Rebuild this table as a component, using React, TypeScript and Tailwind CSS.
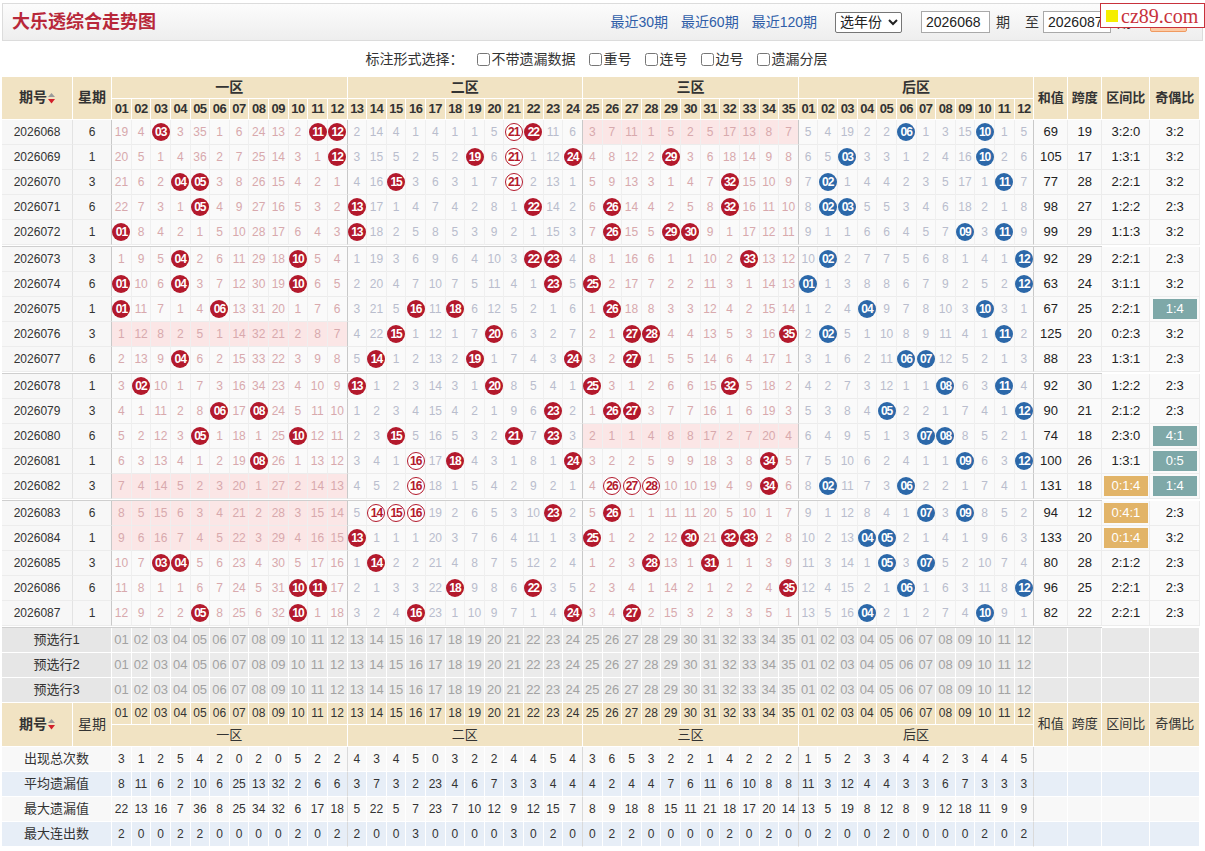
import React from "react";

// row: 期号, 星期, 一区, 二区, 三区, 后区, 和值, 跨度, 区间比, 奇偶比, flags
// "*" = drawn ball, "o" = ringed ball, flags: z = 区间比 highlight, e = 奇偶比 highlight
type Row = [string, string, string, string, string, string, string, string, string, string, string];

const DATA: Row[] = [
  ["2026068", "6", "19 4 * 3 35 1 6 24 13 2 * *", "2 14 4 1 4 1 1 5 o * 11 6", "3 7 11 1 5 2 5 17 13 8 7", "5 4 19 2 2 * 1 3 15 * 1 5", "69", "19", "3:2:0", "3:2", ""],
  ["2026069", "1", "20 5 1 4 36 2 7 25 14 3 1 *", "3 15 5 2 5 2 * 6 o 1 12 *", "4 8 12 2 * 3 6 18 14 9 8", "6 5 * 3 3 1 2 4 16 * 2 6", "105", "17", "1:3:1", "3:2", ""],
  ["2026070", "3", "21 6 2 * * 3 8 26 15 4 2 1", "4 16 * 3 6 3 1 7 o 2 13 1", "5 9 13 3 1 4 7 * 15 10 9", "7 * 1 4 4 2 3 5 17 1 * 7", "77", "28", "2:2:1", "3:2", ""],
  ["2026071", "6", "22 7 3 1 * 4 9 27 16 5 3 2", "* 17 1 4 7 4 2 8 1 * 14 2", "6 * 14 4 2 5 8 * 16 11 10", "8 * * 5 5 3 4 6 18 2 1 8", "98", "27", "1:2:2", "2:3", ""],
  ["2026072", "1", "* 8 4 2 1 5 10 28 17 6 4 3", "* 18 2 5 8 5 3 9 2 1 15 3", "7 * 15 5 * * 9 1 17 12 11", "9 1 1 6 6 4 5 7 * 3 * 9", "99", "29", "1:1:3", "3:2", ""],
  ["2026073", "3", "1 9 5 * 2 6 11 29 18 * 5 4", "1 19 3 6 9 6 4 10 3 * * 4", "8 1 16 6 1 1 10 2 * 13 12", "10 * 2 7 7 5 6 8 1 4 1 *", "92", "29", "2:2:1", "2:3", ""],
  ["2026074", "6", "* 10 6 * 3 7 12 30 19 * 6 5", "2 20 4 7 10 7 5 11 4 1 * 5", "* 2 17 7 2 2 11 3 1 14 13", "* 1 3 8 8 6 7 9 2 5 2 *", "63", "24", "3:1:1", "3:2", ""],
  ["2026075", "1", "* 11 7 1 4 * 13 31 20 1 7 6", "3 21 5 * 11 * 6 12 5 2 1 6", "1 * 18 8 3 3 12 4 2 15 14", "1 2 4 * 9 7 8 10 3 * 3 1", "67", "25", "2:2:1", "1:4", "e"],
  ["2026076", "3", "1 12 8 2 5 1 14 32 21 2 8 7", "4 22 * 1 12 1 7 * 6 3 2 7", "2 1 * * 4 4 13 5 3 16 *", "2 * 5 1 10 8 9 11 4 1 * 2", "125", "20", "0:2:3", "3:2", ""],
  ["2026077", "6", "2 13 9 * 6 2 15 33 22 3 9 8", "5 * 1 2 13 2 * 1 7 4 3 *", "3 2 * 1 5 5 14 6 4 17 1", "3 1 6 2 11 * * 12 5 2 1 3", "88", "23", "1:3:1", "2:3", ""],
  ["2026078", "1", "3 * 10 1 7 3 16 34 23 4 10 9", "* 1 2 3 14 3 1 * 8 5 4 1", "* 3 1 2 6 6 15 * 5 18 2", "4 2 7 3 12 1 1 * 6 3 * 4", "92", "30", "1:2:2", "2:3", ""],
  ["2026079", "3", "4 1 11 2 8 * 17 * 24 5 11 10", "1 2 3 4 15 4 2 1 9 6 * 2", "1 * * 3 7 7 16 1 6 19 3", "5 3 8 4 * 2 2 1 7 4 1 *", "90", "21", "2:1:2", "2:3", ""],
  ["2026080", "6", "5 2 12 3 * 1 18 1 25 * 12 11", "2 3 * 5 16 5 3 2 * 7 * 3", "2 1 1 4 8 8 17 2 7 20 4", "6 4 9 5 1 3 * * 8 5 2 1", "74", "18", "2:3:0", "4:1", "e"],
  ["2026081", "1", "6 3 13 4 1 2 19 * 26 1 13 12", "3 4 1 o 17 * 4 3 1 8 1 *", "3 2 2 5 9 9 18 3 8 * 5", "7 5 10 6 2 4 1 1 * 6 3 *", "100", "26", "1:3:1", "0:5", "e"],
  ["2026082", "3", "7 4 14 5 2 3 20 1 27 2 14 13", "4 5 2 o 18 1 5 4 2 9 2 1", "4 o o o 10 10 19 4 9 * 6", "8 * 11 7 3 * 2 2 1 7 4 1", "131", "18", "0:1:4", "1:4", "ze"],
  ["2026083", "6", "8 5 15 6 3 4 21 2 28 3 15 14", "5 o o o 19 2 6 5 3 10 * 2", "5 * 1 1 11 11 20 5 10 1 7", "9 1 12 8 4 1 * 3 * 8 5 2", "94", "12", "0:4:1", "2:3", "z"],
  ["2026084", "1", "9 6 16 7 4 5 22 3 29 4 16 15", "* 1 1 1 20 3 7 6 4 11 1 3", "* 1 2 2 12 * 21 * * 2 8", "10 2 13 * * 2 1 4 1 9 6 3", "133", "20", "0:1:4", "3:2", "z"],
  ["2026085", "3", "10 7 * * 5 6 23 4 30 5 17 16", "1 * 2 2 21 4 8 7 5 12 2 4", "1 2 3 * 13 1 * 1 1 3 9", "11 3 14 1 * 3 * 5 2 10 7 4", "80", "28", "2:1:2", "2:3", ""],
  ["2026086", "6", "11 8 1 1 6 7 24 5 31 * * 17", "2 1 3 3 22 * 9 8 6 * 3 5", "2 3 4 1 14 2 1 2 2 4 *", "12 4 15 2 1 * 1 6 3 11 8 *", "96", "25", "2:2:1", "2:3", ""],
  ["2026087", "1", "12 9 2 2 * 8 25 6 32 * 1 18", "3 2 4 * 23 1 10 9 7 1 4 *", "3 4 * 2 15 3 2 3 3 5 1", "13 5 16 * 2 1 2 7 4 * 9 1", "82", "22", "2:2:1", "2:3", ""],
];

const STATS: { label: string; bg: string; vals: string }[] = [
  { label: "出现总次数", bg: "bg-[#f8f8f8]", vals: "3 1 2 5 4 2 0 2 0 5 2 2 4 3 4 5 0 3 2 2 4 4 5 4 3 6 5 3 2 2 1 4 2 2 2 1 5 2 3 3 4 4 2 3 4 4 5" },
  { label: "平均遗漏值", bg: "bg-[#e7eef7]", vals: "8 11 6 2 10 6 25 13 32 2 6 6 3 7 3 2 23 4 6 7 3 3 4 4 4 2 4 4 7 6 11 6 10 8 8 11 3 12 4 4 3 3 6 7 3 3 3" },
  { label: "最大遗漏值", bg: "bg-[#f8f8f8]", vals: "22 13 16 7 36 8 25 34 32 6 17 18 5 22 5 7 23 7 10 12 9 12 15 7 8 9 18 8 15 11 21 18 17 20 14 13 5 19 8 12 8 9 12 18 11 9 9" },
  { label: "最大连出数", bg: "bg-[#e7eef7]", vals: "2 0 0 2 2 0 0 0 0 2 0 2 2 0 0 3 0 0 0 0 3 0 2 0 0 2 2 0 0 0 0 2 0 2 0 0 2 0 0 2 0 0 0 0 2 0 2" },
];

const ZONES = [
  { name: "一区", start: 1, len: 12 },
  { name: "二区", start: 13, len: 12 },
  { name: "三区", start: 25, len: 11 },
  { name: "后区", start: 1, len: 12 },
];

const pad = (n: number) => (n < 10 ? "0" + n : String(n));

// flat list of the 47 column numbers with zone index
const COLS = ZONES.flatMap((z, zi) =>
  Array.from({ length: z.len }, (_, i) => ({ n: z.start + i, zi, last: i === z.len - 1 }))
);

function SortIcon() {
  return (
    <svg width="7" height="11" viewBox="0 0 7 11" className="ml-[1px] inline-block">
      <path d="M3.5 0L7 4H0Z" fill="#9a9a9a" />
      <path d="M0 6H7L3.5 10.5Z" fill="#d21f2a" />
    </svg>
  );
}

function Ball({ n, kind }: { n: number; kind: "red" | "blue" | "ring" }) {
  const cls =
    kind === "red"
      ? "bg-[#b3192c] text-white"
      : kind === "blue"
      ? "bg-[#2c68a9] text-white"
      : "border border-[#b3192c] bg-white text-[#b3192c]";
  return (
    <span
      className={`inline-flex h-[18px] w-[18px] items-center justify-center rounded-full text-[12px] font-bold tracking-[-1px] ${cls}`}
    >
      {pad(n)}
    </span>
  );
}

function Watermark() {
  return (
    <div className="absolute right-0 top-0 z-10 flex h-[25px] w-[105px] items-center gap-[3px] border border-[#c8323c] bg-white pl-[5px]">
      <span className="h-[12px] w-[12px] bg-[#f5ee00]" />
      <span className="font-['Liberation_Serif',serif] text-[20px] leading-none text-[#c8323c]">cz89.com</span>
    </div>
  );
}

function TopBar() {
  return (
    <div className="mx-[2px] mt-[3px] flex h-[38px] items-center border border-[#dcdcdc] bg-linear-to-b from-[#fcfcfc] to-[#eeeeee] pl-[9px] pr-[15px]">
      <h1 className="text-[18px] font-bold text-[#b8283a]">大乐透综合走势图</h1>
      <div className="ml-auto flex items-center text-[14px] text-[#333]">
        <span className="text-[#2f5ea8]">最近30期</span>
        <span className="ml-[13px] text-[#2f5ea8]">最近60期</span>
        <span className="ml-[13px] text-[#2f5ea8]">最近120期</span>
        <select className="ml-[18px] h-[21px] w-[67px] rounded-[2px] border border-[#767676] bg-white text-[14px] text-[#222]">
          <option>选年份</option>
        </select>
        <input
          readOnly
          value="2026068"
          className="ml-[19px] h-[22px] w-[69px] border border-[#a9a9a9] bg-white px-[4px] text-[14px] text-[#222]"
        />
        <span className="ml-[6px]">期</span>
        <span className="ml-[15px]">至</span>
        <input
          readOnly
          value="2026087"
          className="ml-[4px] h-[22px] w-[68px] border border-[#a9a9a9] bg-white px-[4px] text-[14px] text-[#222]"
        />
        <span className="ml-[6px]">期</span>
        <span className="ml-[19px] flex h-[20px] w-[37px] items-center justify-center rounded-[2px] border border-[#f09a60] bg-[#fccba6] text-[13px] text-[#b8283a]">
          查看
        </span>
      </div>
    </div>
  );
}

function Options() {
  const items = ["不带遗漏数据", "重号", "连号", "边号", "遗漏分层"];
  return (
    <div className="flex h-[36px] items-center justify-center pr-[12px] text-[14px] text-[#333]">
      <span>标注形式选择：</span>
      {items.map((t) => (
        <label key={t} className="ml-[13px] flex items-center gap-[2px]">
          <input type="checkbox" className="m-0 h-[13px] w-[13px]" />
          <span>{t}</span>
        </label>
      ))}
    </div>
  );
}

const H = "border-b border-r border-white bg-[#f1e3c3]";

function TopHeader() {
  return (
    <thead>
      <tr className="h-[20px]">
        <th rowSpan={2} className={`${H} text-[14px] font-bold`}>
          期号<SortIcon />
        </th>
        <th rowSpan={2} className={`${H} text-[14px] font-bold`}>星期</th>
        {ZONES.map((z) => (
          <th key={z.name} colSpan={z.len} className={`${H} text-[14px] font-bold`}>
            {z.name}
          </th>
        ))}
        {["和值", "跨度", "区间比", "奇偶比"].map((t) => (
          <th key={t} rowSpan={2} className={`${H} text-[13px] font-bold`}>
            {t}
          </th>
        ))}
      </tr>
      <tr className="h-[20px]">
        {COLS.map((c, i) => (
          <th key={i} className={`${H} p-0 text-[13px] font-semibold tracking-[-0.5px]`}>
            {pad(c.n)}
          </th>
        ))}
      </tr>
    </thead>
  );
}

function Separator() {
  return (
    <tr>
      <td colSpan={51} className="h-[2px] bg-white p-0 text-[0px] leading-[0]">
        <div className="mt-[1px] h-[1px] bg-[#cfcfcf]" />
      </td>
    </tr>
  );
}

function DataRow({ r }: { r: Row }) {
  const [no, wk, z1, z2, z3, bk, sum, span, zr, oe, fl] = r;
  const counts = zr.split(":");
  const tokens = [z1, z2, z3, bk].flatMap((s) => s.split(" "));
  const bb = "border-b border-b-[#ececec]";
  return (
    <tr className="h-[25px]">
      <td className={`${bb} border-r border-r-[#e3e3e3] bg-[#f7f7f7] text-center text-[12px] text-[#333]`}>{no}</td>
      <td className={`${bb} border-r border-r-[#c9c9c9] bg-[#f7f7f7] text-center text-[12px] text-[#333]`}>{wk}</td>
      {COLS.map((c, i) => {
        const t = tokens[i];
        const empty = c.zi < 3 && counts[c.zi] === "0";
        const bg = empty ? "bg-[#fbe6e6]" : "bg-[#fafafa]";
        const br = c.last ? "border-r-[#c9c9c9]" : "border-r-[#efefef]";
        const miss = c.zi % 2 === 0 ? "text-[#d8a9ad]" : "text-[#b9bdcd]";
        return (
          <td key={i} className={`${bb} border-r ${br} ${bg} p-0 text-center text-[12px]`}>
            {t === "*" ? (
              <Ball n={c.n} kind={c.zi === 3 ? "blue" : "red"} />
            ) : t === "o" ? (
              <Ball n={c.n} kind="ring" />
            ) : (
              <span className={miss}>{t}</span>
            )}
          </td>
        );
      })}
      <td className={`${bb} border-r border-r-[#ececec] bg-[#fafafa] text-center text-[13px] text-[#222]`}>{sum}</td>
      <td className={`${bb} border-r border-r-[#ececec] bg-[#fafafa] text-center text-[13px] text-[#222]`}>{span}</td>
      <td className={`${bb} border-r border-r-[#ececec] bg-[#fafafa] p-0 text-center text-[13px] text-[#222]`}>
        {fl.includes("z") ? (
          <span className="inline-block h-[20px] w-[44px] bg-[#e2b468] leading-[20px] text-white">{zr}</span>
        ) : (
          zr
        )}
      </td>
      <td className={`${bb} border-r border-r-[#ececec] bg-[#fafafa] p-0 text-center text-[13px] text-[#222]`}>
        {fl.includes("e") ? (
          <span className="inline-block h-[20px] w-[44px] bg-[#7ea8a8] leading-[20px] text-white">{oe}</span>
        ) : (
          oe
        )}
      </td>
    </tr>
  );
}

function PreRow({ i }: { i: number }) {
  return (
    <tr className="h-[25px]">
      <td colSpan={2} className="border-b border-r border-white bg-[#e6e6e6] text-center text-[13px] text-[#333]">
        预选行{i}
      </td>
      {COLS.map((c, k) => (
        <td key={k} className="border-b border-r border-white bg-[#ebebeb] p-0 text-center text-[13px] text-[#a2a2a2]">
          {pad(c.n)}
        </td>
      ))}
      {[0, 1, 2, 3].map((k) => (
        <td key={k} className="border-b border-r border-white bg-[#e8e8e8]" />
      ))}
    </tr>
  );
}

function BottomHeader() {
  return (
    <>
      <tr className="h-[22px]">
        <td rowSpan={2} className={`${H} text-center text-[14px] font-bold`}>
          期号<SortIcon />
        </td>
        <td rowSpan={2} className={`${H} text-center text-[14px]`}>星期</td>
        {COLS.map((c, i) => (
          <td key={i} className={`${H} p-0 text-center text-[12px]`}>
            {pad(c.n)}
          </td>
        ))}
        {["和值", "跨度", "区间比", "奇偶比"].map((t) => (
          <td key={t} rowSpan={2} className={`${H} text-center text-[13px]`}>
            {t}
          </td>
        ))}
      </tr>
      <tr className="h-[22px]">
        {ZONES.map((z) => (
          <td key={z.name} colSpan={z.len} className={`${H} text-center text-[13px]`}>
            {z.name}
          </td>
        ))}
      </tr>
    </>
  );
}

function StatRow({ label, bg, vals }: { label: string; bg: string; vals: string }) {
  const v = vals.split(" ");
  return (
    <tr className="h-[25px]">
      <td colSpan={2} className={`${bg} border-b border-r border-white text-center text-[13px] text-[#333]`}>
        {label}
      </td>
      {COLS.map((c, i) => (
        <td
          key={i}
          className={`${bg} border-b border-r border-white p-0 text-center text-[12px] text-[#333] ${c.last ? "border-r-[#dadada]" : ""}`}
        >
          {v[i]}
        </td>
      ))}
      {[0, 1, 2, 3].map((k) => (
        <td key={k} className={`${bg} border-b border-r border-white`} />
      ))}
    </tr>
  );
}

export default function App() {
  return (
    <div className="relative min-h-[851px] w-[1205px] bg-white font-['Liberation_Sans','Noto_Sans_CJK_SC',sans-serif] text-[#333]">
      <Watermark />
      <TopBar />
      <Options />
      <table className="ml-[2px] w-[1198px] table-fixed border-separate border-spacing-0">
        <colgroup>
          <col className="w-[71px]" />
          <col className="w-[39px]" />
          {COLS.map((_, i) => (
            <col key={i} className="w-[19.6px]" />
          ))}
          <col className="w-[34px]" />
          <col className="w-[34px]" />
          <col className="w-[48px]" />
          <col className="w-[49px]" />
        </colgroup>
        <TopHeader />
        <tbody>
          {DATA.map((r, i) => (
            <React.Fragment key={r[0]}>
              <DataRow r={r} />
              {i % 5 === 4 && <Separator />}
            </React.Fragment>
          ))}
          {[1, 2, 3].map((i) => (
            <PreRow key={i} i={i} />
          ))}
          <BottomHeader />
          {STATS.map((s) => (
            <StatRow key={s.label} {...s} />
          ))}
        </tbody>
      </table>
    </div>
  );
}
